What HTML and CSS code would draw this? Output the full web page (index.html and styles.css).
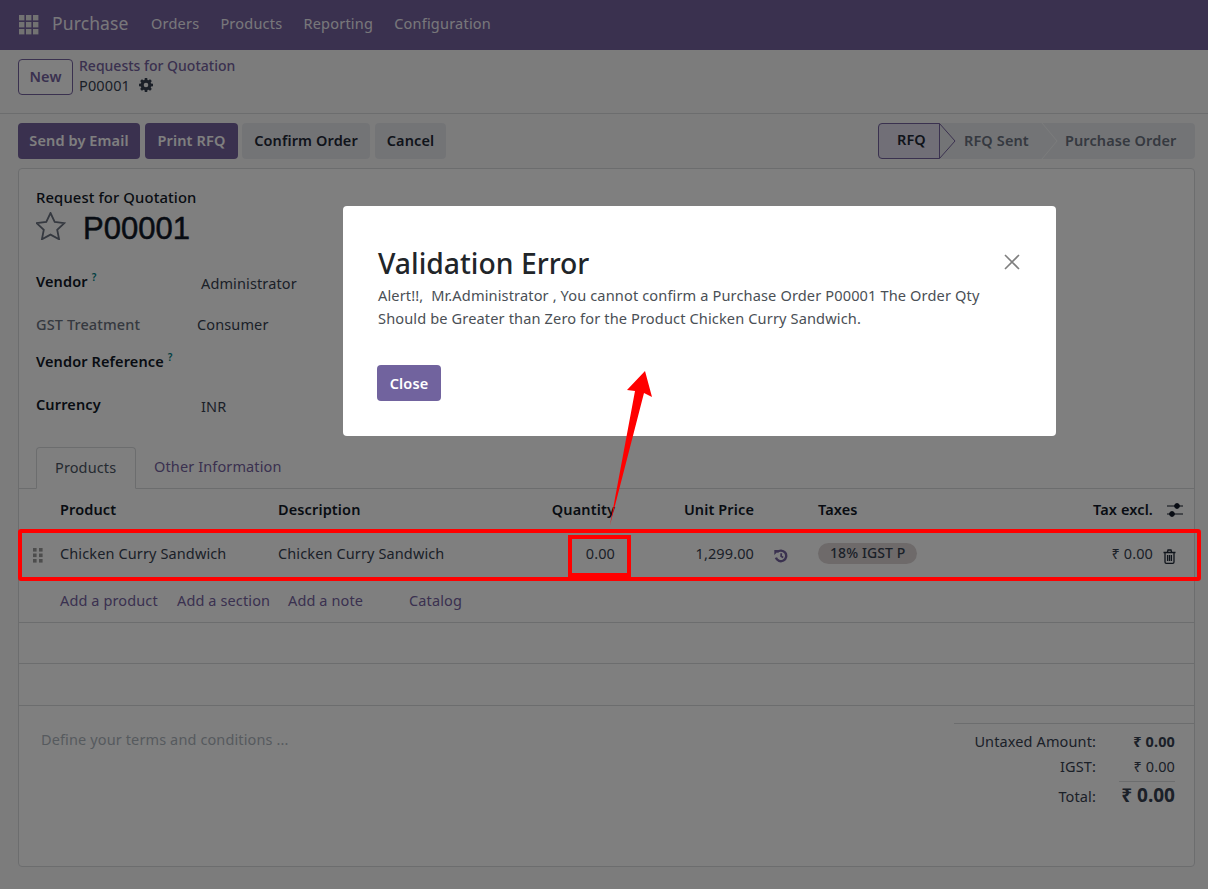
FILE: index.html
```html
<!DOCTYPE html>
<html lang="en">
    <head>
        <meta name="viewport" content="width=device-width">
        <title>Purchase</title>
        <link rel="stylesheet" href="styles.css">
    </head>
    <body>
        <nav class="navbar">
            <svg class="apps" width="20" height="20" viewBox="0 0 20 20">
                <rect x="0" y="0" width="5.4" height="5.4"/><rect x="7" y="0" width="5.4" height="5.4"/><rect x="14" y="0" width="5.4" height="5.4"/>
                <rect x="0" y="7" width="5.4" height="5.4"/><rect x="7" y="7" width="5.4" height="5.4"/><rect x="14" y="7" width="5.4" height="5.4"/>
                <rect x="0" y="14" width="5.4" height="5.4"/><rect x="7" y="14" width="5.4" height="5.4"/><rect x="14" y="14" width="5.4" height="5.4"/>
            </svg>
            <span class="brand">Purchase</span>
            <a class="menu">Orders</a>
            <a class="menu">Products</a>
            <a class="menu">Reporting</a>
            <a class="menu">Configuration</a>
        </nav>

        <div class="panel">
            <button class="btn-new">New</button>
            <div class="crumbs">
                <a class="crumb-link">Requests for Quotation</a>
                <div class="crumb-cur">P00001
                    <svg class="gear" width="14" height="14" viewBox="0 0 14 14">
                        <path fill-rule="evenodd" d="M5.8 0h2.4l.3 1.900 1 .4 1.600-1.100 1.700 1.700-1.100 1.600.4 1 1.900.3v2.400l-1.900.3-.4 1 1.100 1.600-1.700 1.700-1.600-1.100-1 .4-.3 1.900H5.800l-.3-1.900-1-.4-1.600 1.100-1.700-1.700 1.100-1.600-.4-1L0 8.200V5.800l1.900-.3.4-1L1.200 2.900l1.700-1.700 1.600 1.100 1-.4zM7 4.700a2.300 2.300 0 1 0 0 4.600 2.300 2.300 0 0 0 0-4.600z"/>
                    </svg>
                </div>
            </div>
        </div>

        <div class="actions">
            <div class="action-btns">
                <button class="btn primary w-email">Send by Email</button>
                <button class="btn primary w-print">Print RFQ</button>
                <button class="btn secondary w-confirm">Confirm Order</button>
                <button class="btn secondary w-cancel">Cancel</button>
            </div>
            <div class="statusbar">
                <span class="step current">RFQ</span>
                <span class="step s-sent">RFQ Sent</span>
                <span class="step s-order">Purchase Order</span>
                <svg class="chevrons" width="317" height="36" viewBox="0 0 317 36">
                    <path class="chev-cur" d="M61.500 0.500 L77 18 L61.500 35.500"/>
                    <path class="chev" d="M164 0 L179 18 L164 36"/>
                </svg>
            </div>
        </div>

        <main class="sheet">
            <div class="head">
                <div class="doc-type">Request for Quotation</div>
                <div class="doc-title">
                    <svg class="star" width="30" height="28" viewBox="0 0 30 28">
                        <path d="M14.500 1L18.700 9.900 28.300 11.100 21.200 17.800 23.100 27.300 14.500 22.600 5.900 27.300 7.800 17.800 .7 11.100 10.300 9.900Z"/>
                    </svg>
                    <h1>P00001</h1>
                </div>
            </div>

            <div class="fields">
                <div class="field f-vendor"><label>Vendor<sup>?</sup></label><span class="val">Administrator</span></div>
                <div class="field f-gst"><label class="muted">GST Treatment</label><span class="val">Consumer</span></div>
                <div class="field f-ref"><label>Vendor Reference<sup>?</sup></label></div>
                <div class="field f-cur"><label>Currency</label><span class="val">INR</span></div>
            </div>

            <div class="tabs">
                <a class="tab active">Products</a>
                <a class="tab">Other Information</a>
            </div>

            <div class="row thead">
                <span class="c-product">Product</span>
                <span class="c-desc">Description</span>
                <span class="c-qty">Quantity</span>
                <span class="c-price">Unit Price</span>
                <span class="c-taxes">Taxes</span>
                <span class="c-sub">Tax excl.</span>
                <svg class="sliders" width="16" height="14" viewBox="0 0 16 14">
                    <path d="M0 3h16M0 11h16"/>
                    <circle cx="10" cy="3" r="2.400"/><circle cx="5" cy="11" r="2.400"/>
                </svg>
            </div>
            <div class="row tbody">
                <svg class="grip" width="10" height="15" viewBox="0 0 10 15">
                    <rect x="0" y="0" width="3.600" height="3.600"/><rect x="6" y="0" width="3.600" height="3.600"/>
                    <rect x="0" y="5.500" width="3.600" height="3.600"/><rect x="6" y="5.500" width="3.600" height="3.600"/>
                    <rect x="0" y="11" width="3.600" height="3.600"/><rect x="6" y="11" width="3.600" height="3.600"/>
                </svg>
                <span class="c-product">Chicken Curry Sandwich</span>
                <span class="c-desc">Chicken Curry Sandwich</span>
                <span class="c-qty">0.00</span>
                <span class="c-price">1,299.00</span>
                <svg class="history" width="14" height="14" viewBox="0 0 14 14">
                    <path d="M3 3.300A5.300 5.300 0 1 1 1.900 8.600" stroke-width="2.400"/>
                    <path class="solid" d="M0.300 1L5.300 1 0.300 6z"/>
                    <path d="M7.200 4.200V7.300L9.200 8.500" stroke-width="1.800"/>
                </svg>
                <span class="c-taxes"><span class="tag">18% IGST P</span></span>
                <span class="c-sub">₹ 0.00</span>
                <svg class="trash" width="13" height="15" viewBox="0 0 13 15">
                    <path d="M.5 3.500h12M2 3.500v9.500q0 1.300 1.300 1.300h6.400q1.300 0 1.300-1.300V3.500M4.300 3.500l.7-2.500h3l.7 2.500M4.600 6v6M6.500 6v6M8.400 6v6"/>
                </svg>
            </div>
            <div class="row adds">
                <a class="add-a">Add a product</a>
                <a class="add-b">Add a section</a>
                <a class="add-c">Add a note</a>
                <a class="add-d">Catalog</a>
            </div>
            <div class="blank"></div>
            <div class="blank"></div>

            <div class="foot">
                <div class="terms">Define your terms and conditions ...</div>
                <div class="totals">
                    <div class="t-line"><span>Untaxed Amount:</span><b>₹ 0.00</b></div>
                    <div class="t-line"><span>IGST:</span><span class="t-val">₹ 0.00</span></div>
                    <div class="t-line t-total"><span>Total:</span><b>₹ 0.00</b></div>
                </div>
            </div>
        </main>

        <div class="backdrop"></div>

        <div class="modal">
            <svg class="close-x" width="16" height="16" viewBox="0 0 16 16">
                <path d="M1 1L15 15M15 1L1 15"/>
            </svg>
            <h2>Validation Error</h2>
            <p>Alert!!,&nbsp; Mr.Administrator , You cannot confirm a Purchase Order P00001 The Order Qty<br>Should be Greater than Zero for the Product Chicken Curry Sandwich.</p>
            <button class="btn-close">Close</button>
        </div>

        <!-- red markup on top of the shot -->
        <svg class="markup" width="1208" height="889" viewBox="0 0 1208 889">
            <rect class="box" x="20" y="531" width="1179" height="48" rx="1"/>
            <rect class="box" x="570" y="537" width="59" height="38"/>
            <path class="arrow" d="M610 525 L635 391 L627 390 L645 371 L652 397 L644 393 Z"/>
        </svg>
    </body>
</html>
```

FILE: styles.css
```css
* {
    margin: 0;
    padding: 0;
    box-sizing: border-box;
}
html, body {
    height: 100%;
    overflow: hidden;
}
body {
    background-color: #f9f9f9;
    color: #374151;
    font-family: "Noto Sans", "DejaVu Sans", sans-serif;
    font-size: 14.5px;
    letter-spacing: .12px;
}
button {
    font-family: inherit;
    letter-spacing: inherit;
    border: none;
}

/* top bar */
.navbar {
    height: 50px;
    background-color: #75629f;
    display: flex;
    align-items: center;
    padding: 0 0 5px 19px;
    color: #fff;
}
.apps {
    fill: #e4e4e4;
    margin: 5px 13px 0 0;
}
.brand {
    font-size: 17.500px;
    width: 99px;
    opacity: .9;
}
.menu {
    margin-right: 21px;
    letter-spacing: .22px;
    opacity: .9;
}

/* breadcrumb panel */
.panel {
    height: 64px;
    border-bottom: 1px solid #d8dadd;
    display: flex;
    padding: 9px 0 0 18px;
}
.btn-new {
    width: 55px;
    height: 36px;
    padding-bottom: 2px;
    background: #fff;
    border: 1px solid #75629f;
    border-radius: 4px;
    color: #75629f;
    font-size: 14.500px;
    font-weight: 600;
}
.crumbs {
    margin: -3px 0 0 6px;
    line-height: 20px;
}
.crumb-link {
    display: block;
    color: #75629f;
    font-size: 14px;
    letter-spacing: 0;
    font-weight: 500;
}
.crumb-cur {
    display: flex;
    align-items: center;
    gap: 9px;
    color: #374151;
    margin-top: -1px;
}
.gear {
    fill: #374151;
}

/* buttons row */
.actions {
    display: flex;
    justify-content: space-between;
    padding: 9px 13px 9px 18px;
}
.action-btns {
    display: flex;
}
.btn {
    height: 36px;
    padding-bottom: 3px;
    border-radius: 4px;
    font-size: 14.500px;
    font-weight: 600;
    text-align: center;
}
.primary {
    background-color: #75629f;
    color: #fff;
}
.secondary {
    background-color: #e7e9ed;
    color: #1f2937;
}
.w-email { width: 122px; margin-right: 5px; }
.w-print { width: 93px; margin-right: 4px; }
.w-confirm { width: 128px; margin-right: 5px; }
.w-cancel { width: 71px; }

.statusbar {
    width: 317px;
    height: 36px;
    background-color: #e7e9ed;
    border-radius: 4px;
    position: relative;
    display: flex;
    align-items: center;
    padding-bottom: 3px;
    font-weight: 600;
    color: #6b7280;
}
.step {
    white-space: nowrap;
}
.step.current {
    width: 62px;
    height: 36px;
    margin-top: 3px;
    line-height: 31px;
    padding-left: 18px;
    border: 1px solid #75629f;
    border-radius: 4px 0 0 4px;
    background-color: #e2deee;
    color: #1f2937;
}
.s-sent { margin-left: 24px; }
.s-order { margin-left: 36px; }
.chevrons {
    position: absolute;
    left: 0;
    top: 0;
    fill: none;
}
.chev-cur { stroke: #75629f; }
.chev { stroke: #f6f7f8; }

/* form sheet */
.sheet {
    margin: 0 13px 0 18px;
    height: 699px;
    background-color: #fff;
    border: 1px solid #d8dadd;
    border-radius: 4px;
}
.head {
    padding: 18px 0 0 17px;
}
.doc-type {
    color: #111827;
    font-size: 14.800px;
    font-weight: 500;
    line-height: 20px;
}
.doc-title {
    display: flex;
    align-items: center;
    height: 40px;
}
.star {
    fill: none;
    stroke: #6b7280;
    stroke-width: 1.800;
    margin: 0 17px 2px 0;
}
h1 {
    font-family: "Liberation Sans", Arial, sans-serif;
    font-size: 31px;
    font-weight: 400;
    letter-spacing: 0;
    margin-top: 4px;
    color: #111827;
    -webkit-text-stroke: .5px #111827;
}
.fields {
    padding-left: 17px;
}
.field {
    display: flex;
}
.field label {
    width: 165px;
    color: #111827;
    font-weight: 600;
}
.field label.muted {
    width: 161px;
    color: #6b7280;
    font-weight: 500;
}
sup {
    color: #017e84;
    font-size: 10px;
    margin-left: 4px;
    vertical-align: 6px;
    line-height: 0;
}
.val {
    color: #374151;
}
.f-vendor { margin-top: 24px; }
.f-vendor .val, .f-cur .val { padding-top: 2px; }
.f-gst { margin-top: 21px; }
.f-ref { margin-top: 17px; }
.f-cur { margin-top: 23px; }

.tabs {
    margin-top: 31px;
    height: 42px;
    padding-left: 17px;
    border-bottom: 1px solid #d8dadd;
    display: flex;
}
.tab {
    padding: 9px 18px 0;
    color: #75629f;
}
.tab.active {
    width: 100px;
    height: 42px;
    border: 1px solid #d8dadd;
    border-bottom-color: #fff;
    border-radius: 4px 4px 0 0;
    color: #4b5563;
}

/* order lines */
.row {
    position: relative;
    display: flex;
    align-items: center;
}
.thead {
    height: 42px;
    color: #111827;
    font-weight: 600;
    padding-bottom: 2px;
}
.tbody {
    height: 48px;
    padding-bottom: 4px;
}
.c-product { margin-left: 41px; width: 218px; }
.c-desc { width: 222px; }
.c-qty { width: 115px; text-align: right; }
.c-price { width: 139px; text-align: right; }
.c-taxes { margin-left: 64px; }
.c-sub { position: absolute; right: 41px; }
.grip {
    position: absolute;
    left: 14px;
    top: 17px;
    fill: #9a9a9a;
}
.sliders {
    position: absolute;
    right: 11px;
    top: 14px;
    stroke: #111827;
    stroke-width: 1;
    fill: #111827;
}
.history {
    position: absolute;
    left: 755px;
    top: 18px;
    stroke: #75629f;
    fill: none;
}
.history .solid {
    fill: #75629f;
    stroke: none;
}
.trash {
    position: absolute;
    right: 18px;
    top: 18px;
    fill: none;
    stroke: #1f2937;
    stroke-width: 1.300;
}
.tag {
    display: inline-block;
    height: 21px;
    line-height: 20px;
    padding: 0 12px;
    border-radius: 11px;
    background-color: #dcd5d5;
    color: #374151;
    font-size: 14px;
    letter-spacing: .1px;
    font-weight: 500;
}
.adds {
    display: block;
    height: 44px;
    border-bottom: 1px solid #d8dadd;
    color: #75629f;
}
.adds a {
    position: absolute;
    top: 11px;
}
.add-a { left: 41px; }
.add-b { left: 158px; }
.add-c { left: 269px; }
.add-d { left: 390px; }
.blank {
    height: 41px;
    border-bottom: 1px solid #d8dadd;
}
.blank + .blank {
    height: 42px;
}

/* footer */
.foot {
    display: flex;
    justify-content: space-between;
}
.terms {
    padding: 23px 0 0 22px;
    color: #adb5bd;
}
.totals {
    width: 240px;
    margin-top: 17px;
    padding-top: 7px;
    border-top: 1px solid #d8dadd;
}
.t-line {
    display: flex;
    justify-content: flex-end;
    height: 25px;
    line-height: 20px;
    padding-right: 19px;
}
.t-line span:first-child {
    text-align: right;
}
.t-line b, .t-val {
    width: 79px;
    text-align: right;
    font-weight: 700;
}
.t-line .t-val {
    font-weight: 400;
}
.t-total {
    height: 32px;
}
.t-total span:first-child {
    padding-top: 5px;
}
.t-total b {
    font-size: 19px;
    width: 56px;
    margin-left: 23px;
    padding-top: 3px;
    border-top: 1px solid #d8dadd;
    white-space: nowrap;
    letter-spacing: 0;
}

/* dialog */
.backdrop {
    position: fixed;
    inset: 0;
    background-color: rgba(0, 0, 0, .5);
}
.modal {
    position: absolute;
    left: 343px;
    top: 206px;
    width: 713px;
    height: 230px;
    background-color: #fff;
    border-radius: 4px;
    padding: 40px 35px 0;
}
.modal h2 {
    font-size: 28.300px;
    font-weight: 500;
    letter-spacing: 0;
    line-height: 34px;
    color: #212529;
}
.modal p {
    margin-top: 4px;
    font-size: 14.600px;
    line-height: 23px;
    color: #4a4f55;
}
.close-x {
    position: absolute;
    right: 36px;
    top: 48px;
    stroke: #7f7f7f;
    stroke-width: 1.600;
    fill: none;
}
.btn-close {
    display: block;
    margin: 35px 0 0 -1px;
    width: 64px;
    height: 36px;
    border-radius: 4px;
    background-color: #71639e;
    color: #fff;
    font-size: 14.500px;
    font-weight: 600;
}

/* annotation */
.markup {
    position: absolute;
    left: 0;
    top: 0;
}
.box {
    fill: none;
    stroke: #ff0000;
    stroke-width: 4;
}
.arrow {
    fill: #ff0000;
}
```
